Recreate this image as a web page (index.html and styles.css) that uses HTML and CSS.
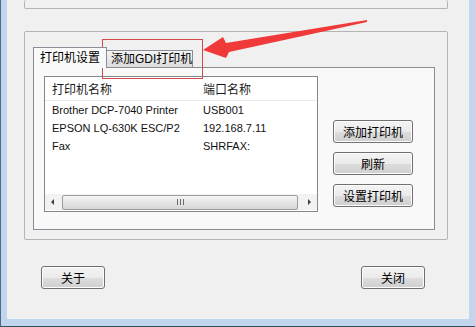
FILE: index.html
```html
<!DOCTYPE html>
<html lang="zh-CN">
<head>
    <meta charset="UTF-8">
    <title>打印机设置</title>
    <link rel="stylesheet" href="styles.css">
</head>
<body>
    <div class="frame">
        <div class="client">
            <div class="group group-top"></div>

            <div class="group group-main">
                <div class="tabs">
                    <div class="tab tab-active">打印机设置</div>
                    <div class="tab">添加GDI打印机</div>
                </div>
                <div class="tab-panel">
                    <div class="listview">
                        <div class="lv-header">
                            <span class="col-name">打印机名称</span>
                            <span class="col-port">端口名称</span>
                        </div>
                        <div class="lv-row">
                            <span class="col-name">Brother DCP-7040 Printer</span>
                            <span class="col-port">USB001</span>
                        </div>
                        <div class="lv-row">
                            <span class="col-name">EPSON LQ-630K ESC/P2</span>
                            <span class="col-port">192.168.7.11</span>
                        </div>
                        <div class="lv-row">
                            <span class="col-name">Fax</span>
                            <span class="col-port">SHRFAX:</span>
                        </div>
                        <div class="hscroll">
                            <span class="arrow arrow-left"></span>
                            <div class="thumb"><span class="grip"></span></div>
                            <span class="arrow arrow-right"></span>
                        </div>
                    </div>
                    <div class="side-buttons">
                        <button class="btn">添加打印机</button>
                        <button class="btn">刷新</button>
                        <button class="btn">设置打印机</button>
                    </div>
                </div>
            </div>

            <div class="footer">
                <button class="btn btn-small">关于</button>
                <button class="btn btn-small">关闭</button>
            </div>
        </div>
    </div>

    <!-- annotation drawn over the dialog -->
    <svg class="annotation" width="475" height="327" viewBox="0 0 475 327">
        <rect x="102.5" y="39.5" width="100" height="39" fill="none" stroke="#cf4a4a" stroke-width="1"/>
        <polygon points="203,50 223,37 226,43 367,20 367,22 229,52 226,58" fill="#f03a3a"/>
    </svg>
</body>
</html>
```

FILE: styles.css
```css
* {
    margin: 0;
    padding: 0;
    box-sizing: border-box;
}

body {
    width: 475px;
    height: 327px;
    overflow: hidden;
    position: relative;
    font-family: "Liberation Sans", "Noto Sans CJK SC", sans-serif;
    font-size: 12px;
    color: #000;
    background: #bcd4ec;
}

.frame {
    height: 327px;
    padding: 0 6px 7px 6px;
    border-left: 1px solid #52687c;
    border-bottom: 1px solid #3a4d60;
    background: #bfd6ee;
}

.client {
    height: 319px;
    background: #f0f0f0;
    display: flex;
    flex-direction: column;
}

.group {
    border: 1px solid #b4b4b4;
    border-radius: 2px;
}

.group-top {
    height: 9px;
    margin: 0 21px 0 17px;
    border-top: none;
}

.group-main {
    height: 209px;
    margin: 22px 21px 0 17px;
    padding: 15px 12px 9px 8px;
    display: flex;
    flex-direction: column;
}

.tabs {
    display: flex;
    align-items: flex-end;
    height: 20px;
}

.tab {
    height: 17px;
    padding: 0 4px;
    border: 1px solid #8a8d95;
    border-bottom: none;
    background: linear-gradient(#f4f4f4, #dcdcdc);
    line-height: 16px;
    white-space: nowrap;
}

.tab-active {
    position: relative;
    z-index: 1;
    width: 74px;
    height: 21px;
    margin-bottom: -1px;
    padding: 0 6px;
    background: #f9f9f9;
    line-height: 20px;
}

.tab-active + .tab {
    border-left: none;
    width: 86px;
}

.tab-panel {
    flex: 1;
    display: flex;
    padding: 8px 0 0 10px;
    border: 1px solid #8a8d95;
    background: #f9f9f9;
}

.listview {
    width: 274px;
    height: 136px;
    border: 1px solid #828790;
    background: #fff;
    display: flex;
    flex-direction: column;
    font-size: 11px;
}

.lv-header {
    display: flex;
    height: 24px;
    align-items: center;
    font-size: 12px;
    color: #1a1a1a;
    border-bottom: 1px solid #eaeaea;
}

.lv-row {
    display: flex;
    height: 18px;
    align-items: center;
    color: #111;
}

.col-name {
    width: 158px;
    padding-left: 7px;
    white-space: nowrap;
}

.col-port {
    white-space: nowrap;
}

.hscroll {
    margin-top: auto;
    margin-bottom: 1px;
    height: 16px;
    display: flex;
    align-items: center;
    background: #f2f2f2;
}

.arrow {
    width: 0;
    height: 0;
    border-top: 3px solid transparent;
    border-bottom: 3px solid transparent;
}

.arrow-left {
    margin: 0 8px 0 6px;
    border-right: 3px solid #404040;
}

.arrow-right {
    margin: 0 6px 0 10px;
    border-left: 3px solid #404040;
}

.thumb {
    flex: 1;
    height: 15px;
    border: 1px solid #9c9c9c;
    border-radius: 2px;
    background: linear-gradient(#f6f6f6, #e4e4e4 50%, #d6d6d6);
    display: flex;
    align-items: center;
    justify-content: center;
}

.grip {
    width: 7px;
    height: 6px;
    background: repeating-linear-gradient(90deg, #6a6a6a 0 1px, transparent 1px 3px);
}

.side-buttons {
    display: flex;
    flex-direction: column;
    gap: 9px;
    margin: 44px 0 0 15px;
}

.btn {
    width: 80px;
    height: 23px;
    border: 1px solid #707070;
    border-radius: 3px;
    background: linear-gradient(#f3f3f3, #ebebeb 50%, #dddddd 51%, #cfcfcf);
    font-family: "Liberation Sans", "Noto Sans CJK SC", sans-serif;
    font-size: 12px;
    color: #000;
    box-shadow: inset 0 0 0 1px #fcfcfc;
}

.footer {
    display: flex;
    justify-content: space-between;
    margin-top: 26px;
    padding: 0 44px 0 34px;
}

.btn-small {
    width: 64px;
}

.annotation {
    position: absolute;
    top: 0;
    left: 0;
    pointer-events: none;
}
```
